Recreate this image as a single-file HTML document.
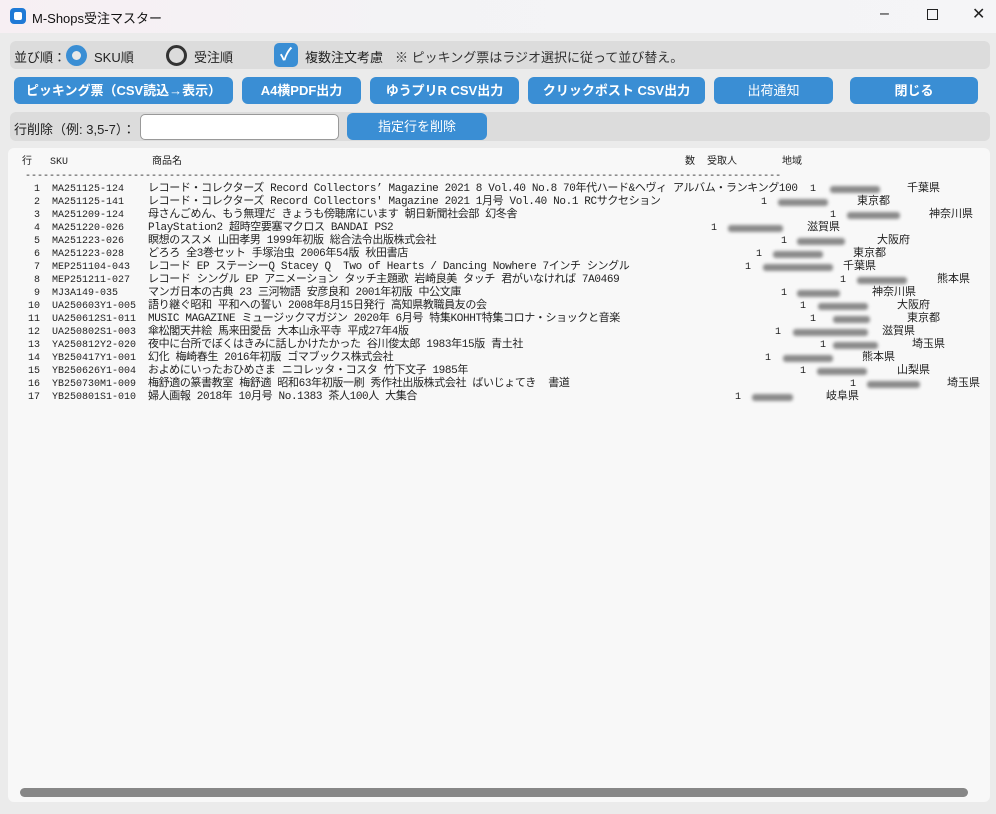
<!DOCTYPE html>
<html><head><meta charset="utf-8">
<style>
*{margin:0;padding:0;box-sizing:border-box}
body{width:996px;height:814px;overflow:hidden;background:#ebebeb;font-family:"Liberation Sans","Noto Sans CJK JP",sans-serif;position:relative}
.title{position:absolute;left:0;top:0;width:996px;height:33px;background:linear-gradient(90deg,#f7eff3,#f3f3f5 40%,#f5f5f7);}
.title .ic{position:absolute;left:10px;top:8px;width:16px;height:16px;border-radius:4px;background:#1f7ad6}
.title .ic:after{content:"";position:absolute;left:4px;top:4px;width:8px;height:8px;border-radius:2px;background:#fff}
.title .t{position:absolute;left:32px;top:8px;font-size:13px;color:#111}
.wc{position:absolute;top:5px;font-size:16px;color:#222}
.band{position:absolute;left:10px;width:980px;background:#dcdcdc;border-radius:6px}
.lbl{position:absolute;font-size:13px;color:#222}
.btn{position:absolute;top:77px;height:27px;background:#3a8ed4;border-radius:6px;color:#fff;font-size:13px;font-weight:bold;text-align:center;line-height:27px}
.panel{position:absolute;left:8px;top:148px;width:982px;height:654px;background:#f8f8f8;border-radius:6px}
.m{position:absolute;font-family:"Liberation Mono","Noto Sans CJK JP",monospace;font-size:10px;color:#222;white-space:pre;line-height:13px}
.n{font-size:11px}
.bl{position:absolute;height:7px;background:#8a8a8a;filter:blur(1.5px);border-radius:3px}
</style></head><body>
<div class="title"><div class="ic"></div><div class="t">M-Shops受注マスター</div>
<div class="wc" style="left:880px">–</div><div class="wc" style="left:927px;top:9px;width:11px;height:11px;border:1.5px solid #222"></div><div class="wc" style="left:972px;top:4px">✕</div></div>

<div class="band" style="top:41px;height:28px"></div>
<div class="lbl" style="left:14px;top:47px">並び順：</div>
<div style="position:absolute;left:66px;top:45px;width:21px;height:21px;border-radius:50%;background:#3a8ed4"><div style="position:absolute;left:6px;top:6px;width:9px;height:9px;border-radius:50%;background:#e8e8e8"></div></div>
<div class="lbl" style="left:94px;top:47px">SKU順</div>
<div style="position:absolute;left:166px;top:45px;width:21px;height:21px;border-radius:50%;border:3px solid #333"></div>
<div class="lbl" style="left:194px;top:47px">受注順</div>
<div style="position:absolute;left:274px;top:43px;width:24px;height:24px;border-radius:5px;background:#3a8ed4;color:#fff;font-size:17px;text-align:center;line-height:24px;font-weight:bold">✓</div>
<div class="lbl" style="left:305px;top:47px">複数注文考慮</div>
<div class="lbl" style="left:395px;top:47px;color:#333">※ ピッキング票はラジオ選択に従って並び替え。</div>

<div class="btn" style="left:14px;width:219px">ピッキング票（CSV読込→表示）</div>
<div class="btn" style="left:242px;width:119px">A4横PDF出力</div>
<div class="btn" style="left:370px;width:149px">ゆうプリR CSV出力</div>
<div class="btn" style="left:528px;width:177px">クリックポスト CSV出力</div>
<div class="btn" style="left:714px;width:119px;font-weight:normal">出荷通知</div>
<div class="btn" style="left:850px;width:128px">閉じる</div>

<div class="band" style="top:112px;height:29px"></div>
<div class="lbl" style="left:14px;top:119px">行削除（例: 3,5-7）：</div>
<div style="position:absolute;left:140px;top:114px;width:199px;height:26px;background:#fff;border:1.5px solid #999;border-radius:5px"></div>
<div class="btn" style="left:347px;top:113px;width:140px;font-weight:normal;font-size:13px">指定行を削除</div>

<div class="panel"></div>
<div style="position:absolute;left:20px;top:788px;width:948px;height:9px;border-radius:5px;background:#878787"></div>

<div class="m" style="left:22px;top:156px">行   SKU</div>
<div class="m" style="left:152px;top:156px">商品名</div>
<div class="m" style="left:685px;top:156px">数  受取人</div>
<div class="m" style="left:782px;top:156px">地域</div>
<div class="m" style="left:25px;top:170px;">------------------------------------------------------------------------------------------------------------------------------</div>

<div class="m" style="left:22px;top:183px">  1  MA251125-124
  2  MA251125-141
  3  MA251209-124
  4  MA251220-026
  5  MA251223-026
  6  MA251223-028
  7  MEP251104-043
  8  MEP251211-027
  9  MJ3A149-035
 10  UA250603Y1-005
 11  UA250612S1-011
 12  UA250802S1-003
 13  YA250812Y2-020
 14  YB250417Y1-001
 15  YB250626Y1-004
 16  YB250730M1-009
 17  YB250801S1-010</div>
<div class="m n" style="left:148px;top:183px;letter-spacing:-0.37px">レコード・コレクターズ Record Collectors’ Magazine 2021 8 Vol.40 No.8 70年代ハード&amp;ヘヴィ アルバム・ランキング100
レコード・コレクターズ Record Collectors' Magazine 2021 1月号 Vol.40 No.1 RCサクセション
母さんごめん、もう無理だ きょうも傍聴席にいます 朝日新聞社会部 幻冬舎
PlayStation2 超時空要塞マクロス BANDAI PS2
瞑想のススメ 山田孝男 1999年初版 総合法令出版株式会社
どろろ 全3巻セット 手塚治虫 2006年54版 秋田書店
レコード EP ステーシーQ Stacey Q  Two of Hearts / Dancing Nowhere 7インチ シングル
レコード シングル EP アニメーション タッチ主題歌 岩崎良美 タッチ 君がいなければ 7A0469
マンガ日本の古典 23 三河物語 安彦良和 2001年初版 中公文庫
語り継ぐ昭和 平和への誓い 2008年8月15日発行 高知県教職員友の会
MUSIC MAGAZINE ミュージックマガジン 2020年 6月号 特集KOHHT特集コロナ・ショックと音楽
傘松閣天井絵 馬来田愛岳 大本山永平寺 平成27年4版
夜中に台所でぼくはきみに話しかけたかった 谷川俊太郎 1983年15版 青土社
幻化 梅崎春生 2016年初版 ゴマブックス株式会社
およめにいったおひめさま ニコレッタ・コスタ 竹下文子 1985年
梅舒適の篆書教室 梅舒適 昭和63年初版一刷 秀作社出版株式会社 ばいじょてき  書道
婦人画報 2018年 10月号 No.1383 茶人100人 大集合</div>

<div id="r"></div>
<script>
var d=[[810,830,880,907,"千葉県"],[761,778,828,857,"東京都"],[830,847,900,929,"神奈川県"],[711,728,783,807,"滋賀県"],[781,797,845,877,"大阪府"],[756,773,823,853,"東京都"],[745,763,833,843,"千葉県"],[840,857,907,937,"熊本県"],[781,797,840,872,"神奈川県"],[800,818,868,897,"大阪府"],[810,833,870,907,"東京都"],[775,793,868,882,"滋賀県"],[820,833,878,912,"埼玉県"],[765,783,833,862,"熊本県"],[800,817,867,897,"山梨県"],[850,867,920,947,"埼玉県"],[735,752,793,826,"岐阜県"]];
var h="";d.forEach(function(a,i){var y=183+i*13;h+='<div class="m" style="left:'+a[0]+'px;top:'+y+'px">1</div><div class="bl" style="left:'+a[1]+'px;top:'+(y+3)+'px;width:'+(a[2]-a[1])+'px"></div><div class="m n" style="left:'+a[3]+'px;top:'+y+'px">'+a[4]+'</div>';});
document.getElementById("r").innerHTML=h;
</script>
</body></html>
